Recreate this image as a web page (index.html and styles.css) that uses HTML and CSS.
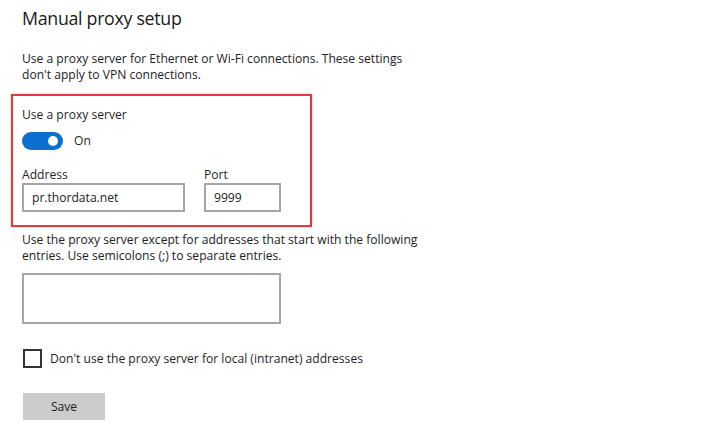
FILE: index.html
```html
<!DOCTYPE html>
<html>
<head>
<meta charset="utf-8">
<link rel="stylesheet" href="styles.css">
</head>
<body>
<div class="page">
  <h1 class="title">Manual proxy setup</h1>
  <p class="desc">Use a proxy server for Ethernet or Wi-Fi connections. These settings<br>don't apply to VPN connections.</p>
  <div class="highlight">
    <div class="label">Use a proxy server</div>
    <div class="toggle-row">
      <span class="toggle"><span class="knob"></span></span>
      <span class="toggle-text">On</span>
    </div>
    <div class="fields">
      <div class="field">
        <div class="field-label">Address</div>
        <div class="input addr">pr.thordata.net</div>
      </div>
      <div class="field">
        <div class="field-label">Port</div>
        <div class="input port">9999</div>
      </div>
    </div>
  </div>
  <p class="desc except">Use the proxy server except for addresses that start with the following<br>entries. Use semicolons (;) to separate entries.</p>
  <div class="textarea"></div>
  <div class="check-row">
    <span class="checkbox"></span>
    <span class="check-text">Don't use the proxy server for local (intranet) addresses</span>
  </div>
  <div class="button">Save</div>
</div>
</body>
</html>
```
FILE: styles.css
```css
html, body {
  margin: 0;
  padding: 0;
  background: #ffffff;
}
body {
  font-family: "Open Sans", "Noto Sans", sans-serif;
  color: #1f1f1f;
  width: 720px;
  height: 434px;
  overflow: hidden;
}
.page {
  padding: 4px 0 0 22px;
}
.title {
  margin: 0;
  font-size: 17.8px;
  letter-spacing: -0.3px;
  font-weight: 400;
  line-height: 28px;
  color: #1a1a1a;
}
.desc {
  margin: 19px 0 0 0;
  font-size: 12.1px;
  line-height: 16px;
  color: #222;
}
.highlight {
  margin: 11px 0 0 -11px;
  width: 288px;
  height: 129px;
  border: 2px solid #e03a3e;
  box-shadow: 0 0 2px rgba(224, 58, 62, 0.35);
  padding: 0 0 0 9px;
  box-sizing: content-box;
}
.label {
  margin-top: 11px;
  font-size: 12.1px;
  line-height: 16px;
}
.toggle-row {
  display: flex;
  align-items: center;
  gap: 11px;
  margin-top: 9px;
}
.toggle {
  width: 41px;
  height: 18px;
  border-radius: 9px;
  background: #0a6fcf;
  position: relative;
  display: block;
}
.knob {
  position: absolute;
  right: 5px;
  top: 4px;
  width: 10px;
  height: 10px;
  border-radius: 50%;
  background: #fff;
}
.toggle-text {
  font-size: 12.1px;
  line-height: 16px;
}
.fields {
  display: flex;
  gap: 19px;
  margin-top: 17px;
}
.field-label {
  font-size: 12.1px;
  line-height: 16px;
  height: 16px;
}
.input {
  box-sizing: border-box;
  height: 29px;
  border: 2px solid #a6a6a6;
  font-size: 12.1px;
  line-height: 25px;
  padding-left: 8px;
  color: #222;
}
.addr { width: 163px; }
.port { width: 77px; }
.except {
  margin-top: 5px;
}
.textarea {
  box-sizing: border-box;
  margin-top: 9px;
  width: 259px;
  height: 51px;
  border: 2px solid #a6a6a6;
}
.check-row {
  display: flex;
  align-items: center;
  gap: 8px;
  margin-top: 25px;
}
.checkbox {
  box-sizing: border-box;
  width: 19px;
  height: 19px;
  border: 2px solid #333;
  display: block;
  margin-left: 1px;
}
.check-text {
  font-size: 12.1px;
  line-height: 16px;
}
.button {
  margin-top: 25px;
  margin-left: 1px;
  width: 82px;
  height: 27px;
  background: #cccccc;
  font-size: 12.1px;
  line-height: 27px;
  text-align: center;
  color: #222;
}
```
